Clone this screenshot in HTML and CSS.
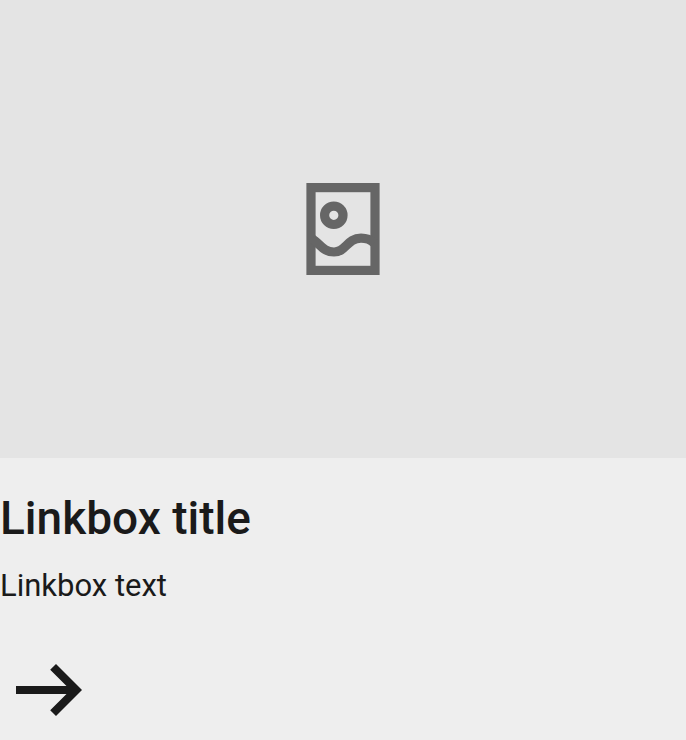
FILE: index.html
```html
<!DOCTYPE html>
<html lang="en">
<head>
<meta charset="utf-8">
<title>Linkbox</title>
<meta name="viewport" content="width=device-width, initial-scale=1">
<link rel="stylesheet" href="styles.css">
</head>
<body>
<article class="linkbox">
  <div class="media">
    <svg class="media-icon" viewBox="0 0 74 92" aria-hidden="true">
      <rect x="5" y="4.6" width="64" height="82.8"/>
      <circle cx="27.8" cy="32.3" r="9.2"/>
      <path d="M6 55.5L9 58C15 62.5 18 69 28 69C40 69 41 55.2 55 55.2C61 55.2 65 57 68 60"/>
    </svg>
  </div>
  <div class="content">
    <h2 class="title">Linkbox title</h2>
    <p class="text">Linkbox text</p>
  </div>
  <a class="link" href="#" aria-label="Linkbox title">
    <svg class="arrow" viewBox="0 0 66 52" aria-hidden="true">
      <path d="M0 22H50.5L34.2 5.7L40 0L66 26L40 52L34.2 46.3L50.5 30H0Z"/>
    </svg>
  </a>
</article>
</body>
</html>
```

FILE: styles.css
```css
body {
  margin: 0;
  background: #eee;
  color: #1a1a1a;
  font-family: Roboto, "Liberation Sans", sans-serif;
}

.media {
  display: grid;
  place-items: center;
  aspect-ratio: 343 / 229;
  background: #e4e4e4;
}

.media-icon {
  width: 74px;
  height: 92px;
  fill: none;
  stroke: #666;
  stroke-width: 9.2;
}

.content {
  padding-top: 32px;
}

.title {
  margin: 0;
  font-size: 46px;
  font-weight: 500;
  line-height: 56px;
}

.text {
  margin: 16px 0 0;
  font-size: 31px;
  line-height: 48px;
}

.link {
  display: block;
  width: max-content;
  padding: 54px 16px 24px;
  color: inherit;
}

.arrow {
  display: block;
  width: 66px;
  height: 52px;
  fill: currentColor;
}
```
